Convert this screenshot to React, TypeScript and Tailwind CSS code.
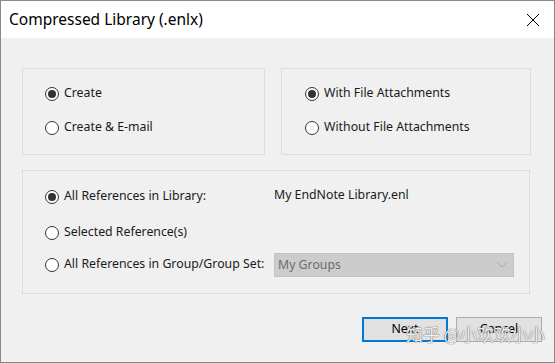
import type { ReactNode } from 'react'

const font = { fontFamily: '"Noto Sans", "Liberation Sans", sans-serif' }

function Radio({ checked, children }: { checked?: boolean; children: ReactNode }) {
    return (
        <label className="flex items-center gap-[5px] text-[12.3px] text-[#1a1a1a] leading-none whitespace-nowrap">
            <span className="w-[14px] h-[14px] rounded-full border border-[#333] bg-white flex items-center justify-center shrink-0">
                {checked && <span className="w-[8px] h-[8px] rounded-full bg-[#333]" />}
            </span>
            <span className="-mt-[1px]">{children}</span>
        </label>
    )
}

export default function App() {
    return (
        <div
            className="relative w-[555px] h-[363px] border border-[#8a8a8a] flex flex-col overflow-hidden bg-[#f0f0f0]"
            style={font}
        >
            {/* title bar */}
            <div className="h-[37px] bg-white flex items-center justify-between pl-[8px] pr-[14px] shrink-0">
                <span className="text-[15.5px] text-black">Compressed Library (.enlx)</span>
                <svg width="14" height="14" viewBox="0 0 14 14" className="text-black">
                    <path d="M1 1 L13 13 M13 1 L1 13" stroke="currentColor" strokeWidth="1" fill="none" />
                </svg>
            </div>

            <div className="flex-1 pl-[21px] pt-[30px] flex flex-col">
                <div className="flex gap-[16px]">
                    <div className="w-[243px] h-[87px] border border-[#dcdcdc] pl-[22px] pt-[18px] flex flex-col gap-[20px]">
                        <Radio checked>Create</Radio>
                        <Radio>Create &amp; E-mail</Radio>
                    </div>
                    <div className="w-[250px] h-[87px] border border-[#dcdcdc] pl-[23px] pt-[18px] flex flex-col gap-[20px]">
                        <Radio checked>With File Attachments</Radio>
                        <Radio>Without File Attachments</Radio>
                    </div>
                </div>

                <div className="mt-[15px] w-[508px] h-[124px] border border-[#dcdcdc] pl-[22px] pt-[8px] grid grid-cols-[229px_240px] grid-rows-[36px_36px_28px] items-center">
                    <Radio checked>All References in Library:</Radio>
                    <span className="text-[12.3px] text-[#1a1a1a] leading-none -mt-[4px]">My EndNote Library.enl</span>
                    <Radio>Selected Reference(s)</Radio>
                    <span />
                    <Radio>All References in Group/Group Set:</Radio>
                    <div className="h-[24px] bg-[#cccccc] border border-[#c4c4c4] flex items-center justify-between pl-[3px] pr-[6px]">
                        <span className="text-[12.3px] text-[#6d6d6d]">My Groups</span>
                        <svg width="10" height="6" viewBox="0 0 10 6">
                            <path d="M0.5 0.5 L5 5 L9.5 0.5" stroke="#a8a8a8" strokeWidth="1" fill="none" />
                        </svg>
                    </div>
                </div>

                <div className="mt-[23px] flex justify-end gap-[8px] pr-[12px]">
                    <button className="w-[86px] h-[25px] bg-[#e1e1e1] border-2 border-[#0078d7] text-[12.3px] text-black">
                        Next
                    </button>
                    <button className="w-[86px] h-[25px] bg-[#e1e1e1] border border-[#adadad] text-[12.3px] text-black">
                        Cancel
                    </button>
                </div>
            </div>

            {/* watermark */}
            <div
                className="absolute left-[405px] top-[324px] whitespace-nowrap text-[17px] leading-none text-white/90 [text-shadow:0_0_1px_#666,0_0_1px_#666] pointer-events-none"
                style={{ fontFamily: '"Noto Sans CJK SC", sans-serif' }}
            >
                知乎 @小欢欢小小
            </div>
        </div>
    )
}
